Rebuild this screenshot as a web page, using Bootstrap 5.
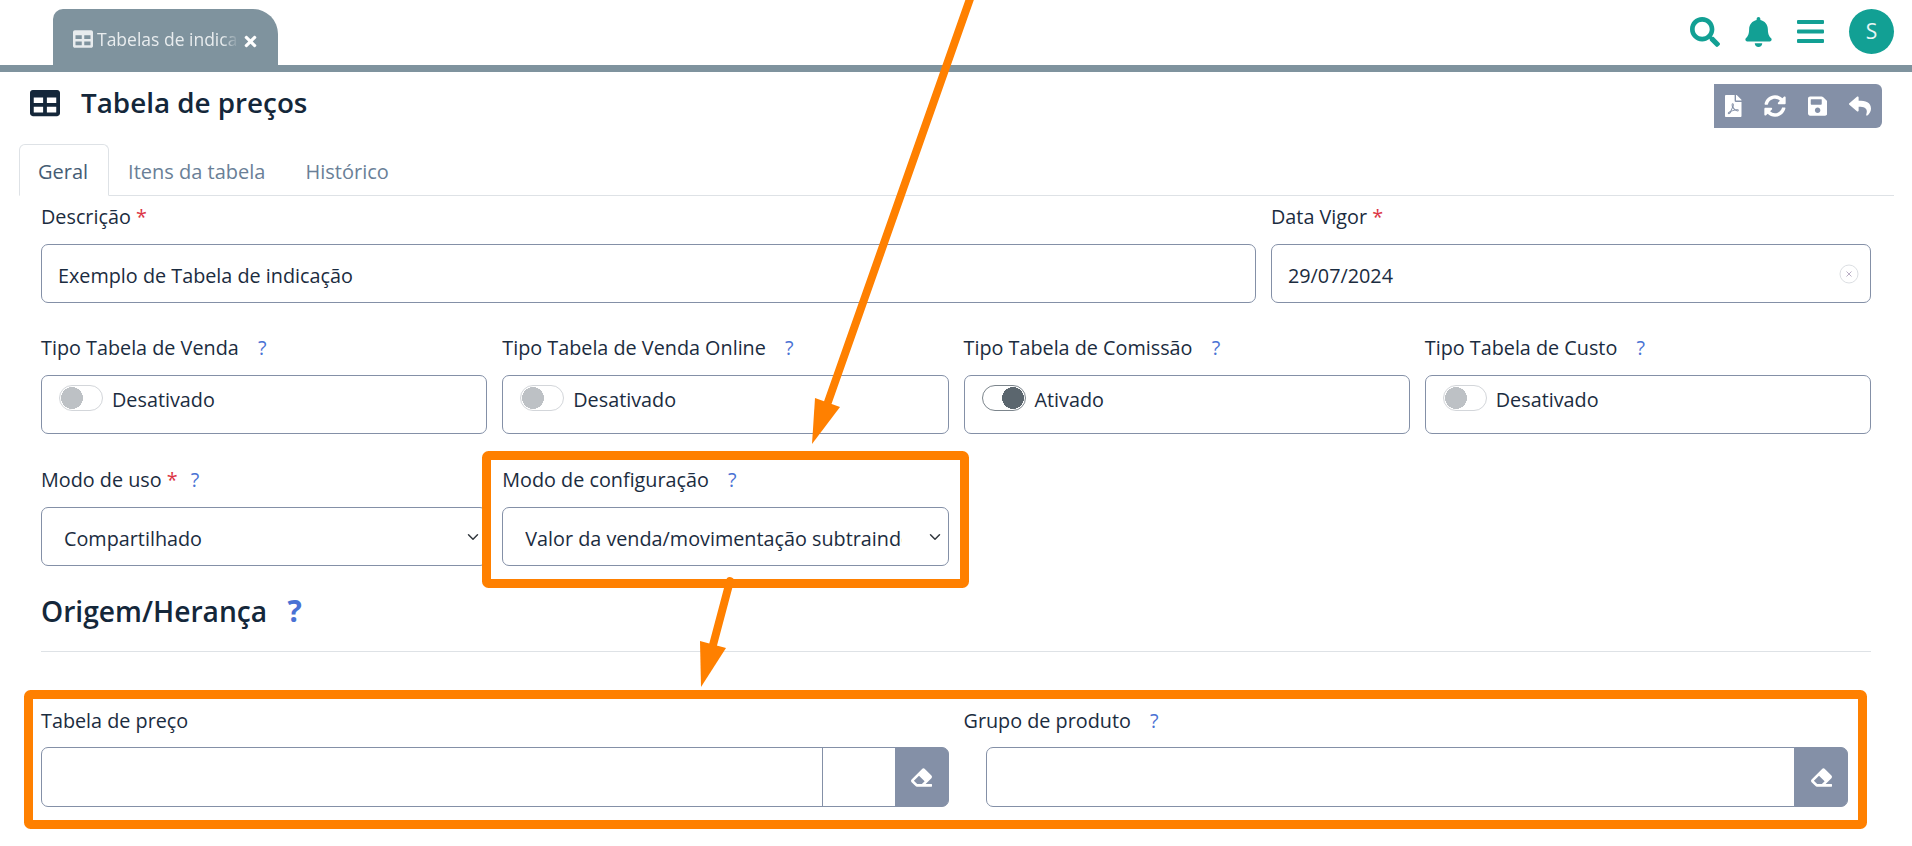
<!DOCTYPE html>
<html lang="pt-BR">
<head>
  <meta charset="UTF-8">
  <title>Tabela de preços</title>
  <link href="https://cdn.jsdelivr.net/npm/bootstrap@5.3.3/dist/css/bootstrap.min.css" rel="stylesheet">
  <script src="https://cdn.jsdelivr.net/npm/bootstrap@5.3.3/dist/js/bootstrap.bundle.min.js"></script>
  <style>
    html, body { overflow: hidden; }
    body { font-family: "Open Sans", "Noto Sans", sans-serif; font-size: 19.8px; color: #1b2c40; background: #fff; }
    .top-bar { height: 72px; border-bottom: 7px solid #7f939e; }
    .page-tab { width: 225px; height: 56px; margin: 9px 0 0 53px; padding: 20px 20px 0; background: #7f939e; border-radius: 10px 25px 0 0; color: #e8ecee; position: relative; }
    .page-tab-label { width: 142px; overflow: hidden; white-space: nowrap; line-height: 20px; font-size: 17.5px; -webkit-mask-image: linear-gradient(to right, #000 88%, transparent 100%); mask-image: linear-gradient(to right, #000 88%, transparent 100%); }
    .page-tab-close { position: absolute; left: 190px; top: 24px; width: 15px; height: 17px; fill: #fff; }
    .top-icon { fill: #12a094; }
    .top-actions { padding: 9px 18px 0 0; gap: 25px; height: 65px; }
    .avatar-circle { width: 45px; height: 45px; border-radius: 50%; background: #12a094; color: #e8f5f4; font-size: 21px; margin-top: 0; }
    .title-row { height: 72px; padding: 12px 30px 0; }
    .page-title { font-size: 27.8px; font-weight: 600; color: #14273a; margin: -2px 0 0 21px; line-height: 40px; }
    .action-group { width: 168px; height: 44px; background: #8490a7; border-radius: 0 6px 6px 0; padding: 0 11px; margin-right: 0; }
    .action-group svg { fill: #fff; height: 22px; display: block; }
    .tabs-row { margin: 0 18px 0 19px; height: 52px; border-color: #dee2e6; }
    .tabs-row .nav-link { height: 52px; padding: 14px 20px 0 18px; color: #6a7f97; font-size: 20px; line-height: 26px; border-radius: 6px 6px 0 0; }
    .tabs-row .nav-link.active { color: #455c74; }
    .form-area { padding: 9px 41px 0 41px; }
    .form-grid { --bs-gutter-x: 15px; margin-bottom: 33px; }
    .form-grid + .form-grid { margin-bottom: 34px; }
    .form-grid.lookup-row { margin-bottom: 0; }
    .field-label { display: block; height: 24px; line-height: 24px; margin-bottom: 15px; white-space: nowrap; }
    .lookup-row .field-label { margin-bottom: 14px; }
    .req-star { color: #dc3545; }
    .help-mark { color: #4a72d4; margin-left: 14px; }
    .req-star + .help-mark { margin-left: 8px; }
    .form-control, .form-select { height: 59px; border-color: #8490a7; border-radius: 7px; color: #1b2c40; font-size: 19.8px; box-shadow: none; }
    .form-control { padding: 4px 16px 0; }
    .form-select { padding: 4px 46px 0 22px; background-position: right 5px center; }
    .date-wrap { position: relative; }
    .date-clear { position: absolute; right: 12px; top: 20px; width: 20px; height: 20px; }
    .switch-box { height: 59px; border: 1px solid #8490a7; border-radius: 7px; padding: 9px 17px 0; gap: 9px; }
    .switch-box .form-check-input { --bs-form-switch-bg: none; flex: none; float: none; margin: 0; width: 44px; height: 26px; background-color: #fff; border-color: #d3d6da; box-shadow: none;
      background-image: radial-gradient(circle 11px at 12px 12px, #bdc1c5 98%, transparent 100%); background-size: auto; background-position: 0 0; }
    .switch-box .form-check-input:checked { background-color: #fff; border-color: #7c858c;
      background-image: radial-gradient(circle 11px at 30px 12px, #5b666e 98%, transparent 100%); background-position: 0 0; }
    .switch-text { line-height: 30px; }
    .form-switch.switch-box { padding-left: 17px; margin: 0; min-height: 0; }
    .section-title { font-size: 28.2px; font-weight: 600; color: #14273a; line-height: 40px; margin: -9px 0 0; }
    .section-title .help-mark { margin-left: 13px; font-size: 30px; font-weight: 700; }
    .section-rule { margin: 20px 0 57px; border-color: #dee2e6; opacity: 1; }
    .lookup-group { height: 60px; }
    .lookup-group .form-control { height: 60px; }
    .lookup-spare { width: 74px; background: #fff; border-color: #8490a7; }
    .eraser-btn { width: 54px; display: flex; align-items: center; justify-content: center; background: #8490a7; border: 1px solid #8490a7; border-radius: 0 7px 7px 0; padding: 0; }
    .eraser-btn svg { width: 21px; height: 21px; fill: #fff; }
    .lookup-narrow { width: calc(100% - 45px); margin-left: 22px; }
    .note-layer { position: absolute; left: 0; top: 0; width: 1912px; height: 846px; pointer-events: none; }
  </style>
</head>
<body>
  <div class="top-bar d-flex justify-content-between">
    <div class="page-tab d-flex">
      <svg class="flex-shrink-0 me-1" width="20" height="20" viewBox="0 0 512 512" fill="#e8ecee"><path d="M464 32H48C21.49 32 0 53.49 0 80v352c0 26.51 21.49 48 48 48h416c26.51 0 48-21.49 48-48V80c0-26.51-21.49-48-48-48zM224 416H64v-96h160v96zm0-160H64v-96h160v96zm224 160H288v-96h160v96zm0-160H288v-96h160v96z"/></svg>
      <div class="page-tab-label">Tabelas de indicação</div>
      <svg class="page-tab-close" viewBox="0 0 352 512"><path d="M242.72 256l100.07-100.07c12.28-12.28 12.28-32.19 0-44.48l-22.24-22.24c-12.28-12.28-32.19-12.28-44.48 0L176 189.28 75.93 89.21c-12.28-12.28-32.19-12.28-44.48 0L9.21 111.45c-12.28 12.28-12.28 32.19 0 44.48L109.28 256 9.21 356.07c-12.28 12.28-12.28 32.19 0 44.48l22.24 22.24c12.28 12.28 32.2 12.28 44.48 0L176 322.72l100.07 100.07c12.28 12.28 32.2 12.28 44.48 0l22.24-22.24c12.28-12.28 12.28-32.19 0-44.48L242.72 256z"/></svg>
    </div>
    <div class="top-actions d-flex align-items-start">
      <svg class="top-icon mt-2" width="30" height="30" viewBox="0 0 512 512"><path d="M505 442.7L405.3 343c-4.5-4.5-10.6-7-17-7H372c27.6-35.3 44-79.7 44-128C416 93.1 322.9 0 208 0S0 93.1 0 208s93.1 208 208 208c48.3 0 92.7-16.4 128-44v16.3c0 6.4 2.5 12.5 7 17l99.7 99.7c9.4 9.4 24.6 9.4 33.9 0l28.3-28.3c9.4-9.4 9.4-24.6.1-34zM208 336c-70.7 0-128-57.2-128-128 0-70.7 57.2-128 128-128 70.7 0 128 57.2 128 128 0 70.7-57.2 128-128 128z"/></svg>
      <svg class="top-icon mt-2" width="27" height="30" viewBox="0 0 448 512"><path d="M224 512c35.32 0 63.97-28.65 63.97-64H160.03c0 35.35 28.65 64 63.97 64zm215.39-149.71c-19.32-20.76-55.47-51.99-55.47-154.29 0-77.7-54.48-139.9-127.94-155.16V32c0-17.67-14.32-32-31.98-32s-31.98 14.33-31.98 32v20.84C118.56 68.1 64.08 130.3 64.08 208c0 102.3-36.15 133.53-55.47 154.29-6 6.45-8.66 14.16-8.61 21.71.11 16.4 12.98 32 32.1 32h383.8c19.12 0 32-15.6 32.1-32 .05-7.55-2.61-15.27-8.61-21.71z"/></svg>
      <svg class="top-icon" style="margin-top:11px" width="27" height="23" viewBox="0 0 27 23"><rect width="27" height="4" rx="1"/><rect y="9.5" width="27" height="4" rx="1"/><rect y="19" width="27" height="4" rx="1"/></svg>
      <div class="avatar-circle d-flex align-items-center justify-content-center">S</div>
    </div>
  </div>

  <div class="title-row d-flex justify-content-between align-items-start">
    <div class="d-flex align-items-center">
      <svg width="30" height="30" viewBox="0 0 512 512" fill="#14273a"><path d="M464 32H48C21.49 32 0 53.49 0 80v352c0 26.51 21.49 48 48 48h416c26.51 0 48-21.49 48-48V80c0-26.51-21.49-48-48-48zM224 416H64v-96h160v96zm0-160H64v-96h160v96zm224 160H288v-96h160v96zm0-160H288v-96h160v96z"/></svg>
      <h1 class="page-title">Tabela de preços</h1>
    </div>
    <div class="action-group d-flex align-items-center justify-content-between">
      <svg viewBox="0 0 384 512"><path d="M181.9 256.1c-5-16-4.9-46.9-2-46.9 8.4 0 7.6 36.9 2 46.9zm-1.7 47.2c-7.7 20.2-17.3 43.3-28.4 62.7 18.3-7 39-17.2 62.9-21.9-12.7-9.6-24.9-23.4-34.5-40.8zM86.1 428.1c0 .8 13.2-5.4 34.9-40.2-6.7 6.3-29.1 24.5-34.9 40.2zM248 160h136v328c0 13.3-10.7 24-24 24H24c-13.3 0-24-10.7-24-24V24C0 10.7 10.7 0 24 0h200v136c0 13.2 10.8 24 24 24zm-8 171.8c-20-12.2-33.3-29-42.7-53.8 4.5-18.5 11.6-46.6 6.2-64.2-4.7-29.4-42.4-26.5-47.8-6.8-5 18.3-.4 44.1 8.1 77-11.6 27.6-28.7 64.6-40.8 85.8-.1 0-.1.1-.2.1-27.1 13.9-73.6 44.5-54.5 68 5.6 6.9 16 10 21.5 10 17.9 0 35.7-18 61.1-61.8 25.8-8.5 54.1-19.1 79-23.2 21.7 11.8 47.1 19.5 64 19.5 29.2 0 31.2-32 19.7-43.4-13.9-13.6-54.3-9.7-73.6-7.2zM377 105L279 7c-4.5-4.5-10.6-7-17-7h-6v128h128v-6.1c0-6.3-2.5-12.4-7-16.9zm-74.1 255.3c4.1-2.7-2.5-11.9-42.8-9 37.1 15.8 42.8 9 42.8 9z"/></svg>
      <svg viewBox="0 0 512 512"><path d="M370.72 133.28C339.458 104.008 298.888 87.962 255.848 88c-77.458.068-144.328 53.178-162.791 126.85-1.344 5.363-6.122 9.15-11.651 9.15H24.103c-7.498 0-13.194-6.807-11.807-14.176C33.933 94.924 134.813 8 256 8c66.448 0 126.791 26.136 171.315 68.685L463.03 40.97C478.149 25.851 504 36.559 504 57.941V192c0 13.255-10.745 24-24 24H345.941c-21.382 0-32.09-25.851-16.971-40.971l41.75-41.749zM32 296h134.059c21.382 0 32.09 25.851 16.971 40.971l-41.75 41.75c31.262 29.273 71.835 45.319 114.876 45.28 77.418-.07 144.315-53.144 162.787-126.849 1.344-5.363 6.122-9.15 11.651-9.15h57.304c7.498 0 13.194 6.807 11.807 14.176C478.067 417.076 377.187 504 256 504c-66.448 0-126.791-26.136-171.315-68.685L48.97 471.03C33.851 486.149 8 475.441 8 454.059V320c0-13.255 10.745-24 24-24z"/></svg>
      <svg viewBox="0 0 448 512"><path d="M433.941 129.941l-83.882-83.882A48 48 0 0 0 316.118 32H48C21.49 32 0 53.49 0 80v352c0 26.51 21.49 48 48 48h352c26.51 0 48-21.49 48-48V163.882a48 48 0 0 0-14.059-33.941zM224 416c-35.346 0-64-28.654-64-64 0-35.346 28.654-64 64-64s64 28.654 64 64c0 35.346-28.654 64-64 64zm96-304.52V212c0 6.627-5.373 12-12 12H76c-6.627 0-12-5.373-12-12V108c0-6.627 5.373-12 12-12h228.52c3.183 0 6.235 1.264 8.485 3.515l3.48 3.48A11.996 11.996 0 0 1 320 111.48z"/></svg>
      <svg viewBox="0 0 512 512"><path d="M8.309 189.836L184.313 37.851C199.719 24.546 224 35.347 224 56.015v80.053c160.629 1.839 288 34.032 288 186.258 0 61.441-39.581 122.309-83.333 154.132-13.653 9.931-33.111-2.533-28.077-18.631 45.344-145.012-21.507-183.51-176.59-185.742V360c0 20.7-24.3 31.453-39.687 18.164l-176.004-152c-11.071-9.562-11.086-26.753 0-36.328z"/></svg>
    </div>
  </div>

  <ul class="nav nav-tabs tabs-row">
    <li class="nav-item"><a class="nav-link active" href="#">Geral</a></li>
    <li class="nav-item"><a class="nav-link" href="#">Itens da tabela</a></li>
    <li class="nav-item"><a class="nav-link" href="#">Histórico</a></li>
  </ul>

  <div class="form-area">
    <div class="row form-grid">
      <div class="col-8">
        <label class="field-label">Descrição <span class="req-star">*</span></label>
        <input type="text" class="form-control" value="Exemplo de Tabela de indicação">
      </div>
      <div class="col-4">
        <label class="field-label">Data Vigor <span class="req-star">*</span></label>
        <div class="date-wrap">
          <input type="text" class="form-control" value="29/07/2024">
          <svg class="date-clear" viewBox="0 0 20 20" fill="none"><circle cx="10" cy="10" r="9" stroke="#dcdfe3"/><path d="M7.5 7.5l5 5m0-5l-5 5" stroke="#b9aec4"/></svg>
        </div>
      </div>
    </div>

    <div class="row form-grid">
      <div class="col-3">
        <label class="field-label">Tipo Tabela de Venda <span class="help-mark">?</span></label>
        <div class="form-check form-switch switch-box d-flex">
          <input class="form-check-input" type="checkbox">
          <span class="switch-text">Desativado</span>
        </div>
      </div>
      <div class="col-3">
        <label class="field-label">Tipo Tabela de Venda Online <span class="help-mark">?</span></label>
        <div class="form-check form-switch switch-box d-flex">
          <input class="form-check-input" type="checkbox">
          <span class="switch-text">Desativado</span>
        </div>
      </div>
      <div class="col-3">
        <label class="field-label">Tipo Tabela de Comissão <span class="help-mark">?</span></label>
        <div class="form-check form-switch switch-box d-flex">
          <input class="form-check-input" type="checkbox" checked>
          <span class="switch-text">Ativado</span>
        </div>
      </div>
      <div class="col-3">
        <label class="field-label">Tipo Tabela de Custo <span class="help-mark">?</span></label>
        <div class="form-check form-switch switch-box d-flex">
          <input class="form-check-input" type="checkbox">
          <span class="switch-text">Desativado</span>
        </div>
      </div>
    </div>

    <div class="row form-grid">
      <div class="col-3">
        <label class="field-label">Modo de uso <span class="req-star">*</span> <span class="help-mark">?</span></label>
        <select class="form-select"><option>Compartilhado</option></select>
      </div>
      <div class="col-3">
        <label class="field-label">Modo de configuração <span class="help-mark">?</span></label>
        <select class="form-select"><option>Valor da venda/movimentação subtraindo custo</option></select>
      </div>
    </div>

    <h2 class="section-title">Origem/Herança <span class="help-mark">?</span></h2>
    <hr class="section-rule">

    <div class="row form-grid lookup-row">
      <div class="col-6">
        <label class="field-label">Tabela de preço</label>
        <div class="input-group lookup-group">
          <input type="text" class="form-control">
          <span class="input-group-text lookup-spare"></span>
          <button class="eraser-btn" type="button"><svg viewBox="0 0 512 512"><path d="M497.941 273.941c18.745-18.745 18.745-49.137 0-67.882l-160-160c-18.745-18.745-49.137-18.745-67.882 0l-256 256c-18.745 18.745-18.745 49.137 0 67.882l96 96A48.002 48.002 0 0 0 144 480h356c6.627 0 12-5.373 12-12v-40c0-6.627-5.373-12-12-12H355.883l142.058-142.059zm-302.627-62.627l137.373 137.373L265.373 416H150.628l-80-80 124.686-124.686z"/></svg></button>
        </div>
      </div>
      <div class="col-6">
        <label class="field-label">Grupo de produto <span class="help-mark">?</span></label>
        <div class="input-group lookup-group lookup-narrow">
          <input type="text" class="form-control">
          <button class="eraser-btn" type="button"><svg viewBox="0 0 512 512"><path d="M497.941 273.941c18.745-18.745 18.745-49.137 0-67.882l-160-160c-18.745-18.745-49.137-18.745-67.882 0l-256 256c-18.745 18.745-18.745 49.137 0 67.882l96 96A48.002 48.002 0 0 0 144 480h356c6.627 0 12-5.373 12-12v-40c0-6.627-5.373-12-12-12H355.883l142.058-142.059zm-302.627-62.627l137.373 137.373L265.373 416H150.628l-80-80 124.686-124.686z"/></svg></button>
        </div>
      </div>
    </div>
  </div>

  <svg class="note-layer" viewBox="0 0 1912 846">
    <g fill="none" stroke="#ff8000" stroke-width="9" stroke-linejoin="round">
      <rect x="486.5" y="455.5" width="478" height="128" rx="2"/>
      <rect x="28.5" y="694.5" width="1834" height="130" rx="2"/>
    </g>
    <g stroke="#ff8000" stroke-width="8" stroke-linecap="round" fill="#ff8000">
      <line x1="971" y1="-4" x2="828" y2="402"/>
      <line x1="730" y1="581" x2="713" y2="645"/>
    </g>
    <g fill="#ff8000">
      <polygon points="815,398 840,407 812,444"/>
      <polygon points="700,641 726,648 701,687"/>
    </g>
  </svg>
</body>
</html>
